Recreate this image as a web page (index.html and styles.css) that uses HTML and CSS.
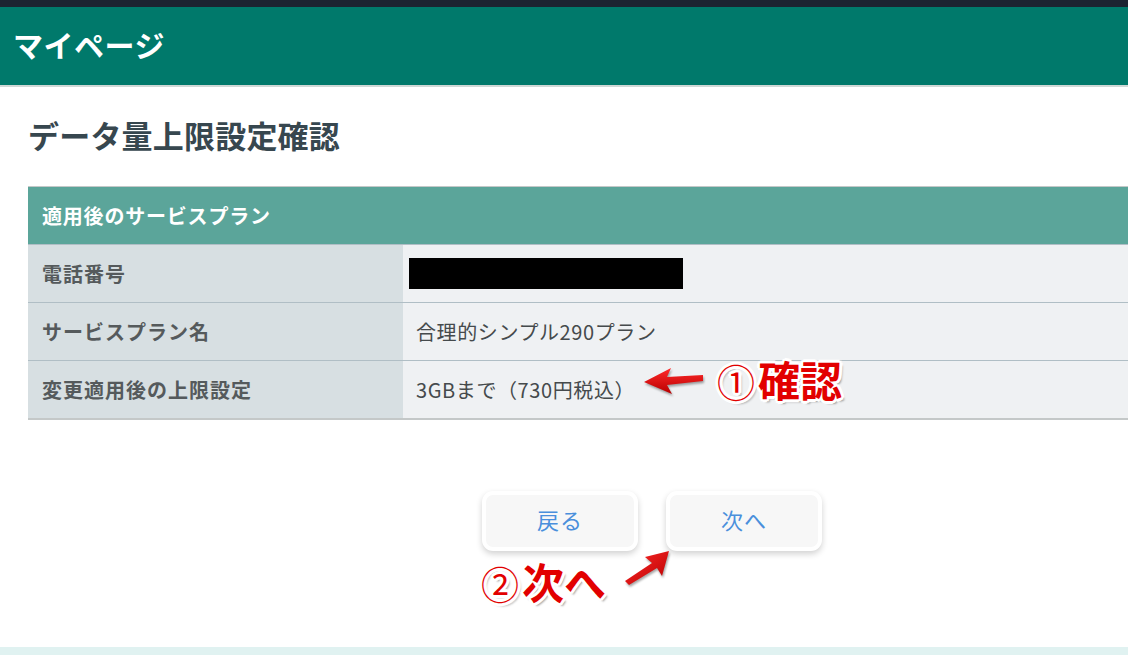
FILE: index.html
```html
<!DOCTYPE html>
<html lang="ja">
<head>
<meta charset="utf-8">
<title>マイページ</title>
<link rel="stylesheet" href="styles.css">
</head>
<body>
<div class="page">
  <div class="topbar"></div>
  <header class="header"><span class="brand">マイページ</span></header>
  <main class="main">
    <h1 class="title">データ量上限設定確認</h1>
    <table class="plan">
      <thead>
        <tr><th colspan="2" class="plan-head">適用後のサービスプラン</th></tr>
      </thead>
      <tbody>
        <tr><th class="label">電話番号</th><td class="value"><span class="redact"></span></td></tr>
        <tr><th class="label">サービスプラン名</th><td class="value">合理的シンプル290プラン</td></tr>
        <tr><th class="label">変更適用後の上限設定</th><td class="value">3GBまで（730円税込）</td></tr>
      </tbody>
    </table>
    <div class="actions">
      <button class="btn" type="button">戻る</button>
      <button class="btn" type="button">次へ</button>
    </div>
  </main>
  <div class="footer-band"></div>

  <div class="note note-1"><span class="num">①</span>確認</div>
  <svg class="arrow arrow-1" width="70" height="36" viewBox="0 0 70 36">
    <defs>
      <linearGradient id="g1" x1="0" y1="0" x2="0" y2="1">
        <stop offset="0" stop-color="#ff2a2a"/>
        <stop offset="1" stop-color="#b80000"/>
      </linearGradient>
    </defs>
    <polygon points="3,16 30,2 26,11 62,9 62,15 26,19 31,28" fill="url(#g1)"/>
  </svg>
  <div class="note note-2"><span class="num">②</span>次へ</div>
  <svg class="arrow arrow-2" width="60" height="44" viewBox="0 0 60 44">
    <defs>
      <linearGradient id="g2" x1="0" y1="0" x2="1" y2="1">
        <stop offset="0" stop-color="#ff2a2a"/>
        <stop offset="1" stop-color="#b80000"/>
      </linearGradient>
    </defs>
    <polygon points="52,6 45,31 40,23 12,40 8,36 35,18 28,12" fill="url(#g2)"/>
  </svg>
</div>
</body>
</html>
```
FILE: styles.css
```css
html, body {
  margin: 0;
  padding: 0;
  background: #ffffff;
  overflow: hidden;
}
body {
  font-family: "Noto Sans CJK JP", "Noto Sans", sans-serif;
  width: 1128px;
  height: 655px;
}
.page {
  position: relative;
  width: 1128px;
  height: 655px;
  overflow: hidden;
  display: flex;
  flex-direction: column;
}
.topbar {
  height: 7px;
  background: #1c2331;
  flex: none;
}
.header {
  height: 78px;
  background: #00796b;
  border-bottom: 2px solid #cfd8d6;
  display: flex;
  align-items: center;
  padding-left: 13px;
  flex: none;
}
.brand {
  color: #ffffff;
  font-size: 30px;
  font-weight: 700;
  line-height: 1;
  margin-top: -4px;
  letter-spacing: 0.5px;
}
.main {
  flex: 1;
  padding: 0 0 0 28px;
}
.title {
  margin: 28px 0 0 0;
  height: 40px;
  line-height: 40px;
  font-size: 31px;
  font-weight: 700;
  color: #37474f;
  letter-spacing: 0.2px;
}
.plan {
  margin-top: 31px;
  width: 1140px;
  border-collapse: collapse;
  border-top: 1px solid #c4c8c8;
}
.plan-head {
  height: 57px;
  background: #5ba59a;
  color: #ffffff;
  font-size: 20px;
  font-weight: 700;
  text-align: left;
  padding: 0 0 0 14px;
  border-bottom: 1px solid #b0bec5;
  letter-spacing: 0.8px;
}
.label {
  width: 361px;
  height: 57px;
  background: #d7dfe2;
  color: #555a5c;
  font-size: 20px;
  font-weight: 700;
  text-align: left;
  padding: 0 0 0 14px;
  border-bottom: 1px solid #b0bec5;
  letter-spacing: 1px;
}
.value {
  background: #eff1f3;
  color: #454a4c;
  font-size: 20px;
  padding: 0 0 0 13px;
  border-bottom: 1px solid #b0bec5;
  letter-spacing: 0.6px;
}
.plan tbody tr:last-child .label,
.plan tbody tr:last-child .value {
  border-bottom: 2px solid #c4c8c8;
}
.redact {
  display: block;
  width: 274px;
  height: 31px;
  background: #000000;
  margin-left: -7px;
}
.actions {
  display: flex;
  gap: 28px;
  margin-top: 71px;
  padding-left: 454px;
}
.btn {
  width: 156px;
  height: 60px;
  border: 4px solid #ffffff;
  border-radius: 11px;
  background: #f7f7f7;
  box-shadow: 0 3px 6px rgba(0, 0, 0, 0.18);
  color: #4a8fdc;
  font-family: "Noto Sans CJK JP", "Noto Sans", sans-serif;
  font-size: 22px;
  padding: 0 0 4px 0;
  letter-spacing: 1px;
}
.footer-band {
  height: 8px;
  background: #e0f2f1;
  flex: none;
}
.note {
  position: absolute;
  color: #e20000;
  font-size: 42px;
  font-weight: 700;
  line-height: 1;
  text-shadow:
    2px 0 0 #fff, -2px 0 0 #fff, 0 2px 0 #fff, 0 -2px 0 #fff,
    2px 2px 0 #fff, -2px -2px 0 #fff, 2px -2px 0 #fff, -2px 2px 0 #fff,
    3px 0 0 #fff, -3px 0 0 #fff, 0 3px 0 #fff, 0 -3px 0 #fff,
    3px 3px 2px rgba(0,0,0,0.35);
}
.num {
  font-weight: 400;
  font-size: 38px;
  margin-right: 3px;
}
.note-1 {
  left: 717px;
  top: 358px;
}
.note-2 {
  left: 481px;
  top: 560px;
}
.arrow {
  position: absolute;
  filter: drop-shadow(1px 2px 1px rgba(0,0,0,0.35));
}
.arrow-1 {
  left: 641px;
  top: 366px;
}
.arrow-2 {
  left: 617px;
  top: 545px;
}
```
